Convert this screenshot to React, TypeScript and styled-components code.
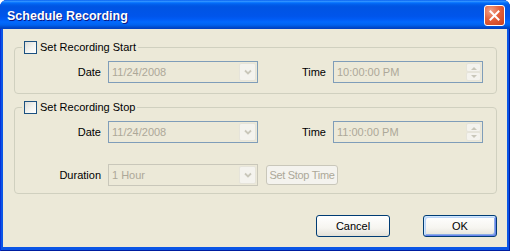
import React from "react";
import styled, { createGlobalStyle } from "styled-components";

const Global = createGlobalStyle`
  html, body { margin: 0; padding: 0; background: #ffffff; }
  body {
    font-family: Tahoma, "Liberation Sans", Arial, sans-serif;
    font-size: 11px;
    color: #000;
  }
`;

const Window = styled.div`
  width: 510px;
  height: 251px;
  box-sizing: border-box;
  display: flex;
  flex-direction: column;
  background: #0A55E6;
  border-radius: 7px 7px 0 0;
  overflow: hidden;
  box-shadow: inset 1px 0 #0831D9, inset -1px 0 #001EA0, inset 0 -1px #001EA0;
`;

const TitleBar = styled.div`
  flex: none;
  height: 29px;
  box-sizing: border-box;
  display: flex;
  align-items: center;
  justify-content: space-between;
  padding: 0 5px 0 7px;
  background: linear-gradient(
    to bottom,
    #0058ee 0%,
    #3593ff 4%,
    #288eff 6%,
    #127dff 8%,
    #036ffc 10%,
    #0262ee 14%,
    #0057e5 20%,
    #0054e3 24%,
    #0055eb 56%,
    #005bf5 66%,
    #026afe 76%,
    #0062ef 86%,
    #0052d6 92%,
    #0046c8 96%,
    #0041c0 100%
  );
`;

const Title = styled.span`
  font-family: "Liberation Sans", Arial, sans-serif;
  font-weight: bold;
  font-size: 12.5px;
  color: #fff;
  text-shadow: 1px 1px #0a1883;
  margin-top: 2px;
`;

const CloseButton = styled.div`
  width: 21px;
  height: 21px;
  box-sizing: border-box;
  border: 1px solid #fff;
  border-radius: 3px;
  background: radial-gradient(circle at 30% 25%, #f1a28a 0%, #e4613c 45%, #c9401c 100%);
  display: flex;
  align-items: center;
  justify-content: center;
  margin-top: 2px;
`;

const Client = styled.div`
  flex: 1;
  margin: 0 3px 4px 3px;
  background: #ece9d8;
  padding: 12px 10px 10px 11px;
  display: flex;
  flex-direction: column;
`;

const Group = styled.fieldset<{ $top: number; $bottom: number }>`
  margin: ${(p) => p.$top}px 0 0 0;
  padding: 0 0 ${(p) => p.$bottom}px 0;
  border: 1px solid #d0d0bf;
  border-radius: 4px;
  min-width: 0;
`;

const Legend = styled.legend`
  margin-left: 7px;
  padding: 0 2px;
  height: 13px;
  line-height: 13px;
  display: flex;
  align-items: center;
  gap: 3px;
`;

const CheckBox = styled.span`
  width: 13px;
  height: 13px;
  box-sizing: border-box;
  border: 1px solid #1c5180;
  background: linear-gradient(135deg, #dcdcd7 0%, #f4f4f0 55%, #ffffff 100%);
`;

const Row = styled.div<{ $top: number }>`
  display: flex;
  align-items: center;
  margin-top: ${(p) => p.$top}px;
`;

const Label = styled.span<{ $w: number }>`
  width: ${(p) => p.$w}px;
  text-align: right;
  margin-right: 7px;
  white-space: nowrap;
`;

const Field = styled.div<{ $border: string }>`
  width: 150px;
  height: 22px;
  box-sizing: border-box;
  border: 1px solid ${(p) => p.$border};
  background: #ece9d8;
  display: flex;
  align-items: center;
  justify-content: space-between;
  color: #aca899;
`;

const FieldText = styled.span`
  padding-left: 3px;
`;

const DropButton = styled.div`
  width: 17px;
  height: 18px;
  margin: 1px;
  box-sizing: border-box;
  border: 1px solid #e6e4da;
  border-radius: 2px;
  background: #f4f3ee;
  display: flex;
  align-items: center;
  justify-content: center;
`;

const Spinner = styled.div`
  width: 15px;
  height: 18px;
  margin: 1px;
  display: flex;
  flex-direction: column;
`;

const SpinHalf = styled.div`
  flex: 1;
  box-sizing: border-box;
  border: 1px solid #e6e4da;
  border-radius: 2px;
  background: #f4f3ee;
  display: flex;
  align-items: center;
  justify-content: center;
`;

const DisabledButton = styled.div`
  width: 72px;
  height: 20px;
  margin-left: 8px;
  box-sizing: border-box;
  border: 1px solid #c9c7ba;
  border-radius: 3px;
  background: #f4f3ee;
  color: #aca899;
  letter-spacing: -0.3px;
  white-space: nowrap;
  display: flex;
  align-items: center;
  justify-content: center;
`;

const ButtonRow = styled.div`
  display: flex;
  justify-content: flex-end;
  gap: 33px;
  margin-top: 21px;
`;

const Button = styled.div<{ $default?: boolean }>`
  width: 74px;
  height: 22px;
  box-sizing: border-box;
  border: 1px solid #003c74;
  border-radius: 3px;
  background: linear-gradient(to bottom, #ffffff 0%, #f6f5f0 60%, #e3e1d8 100%);
  display: flex;
  align-items: center;
  justify-content: center;
  box-shadow: ${(p) =>
    p.$default
      ? "inset 1px 1px #cee7ff, inset -1px -1px #6982ee, inset 2px 2px #bcd4f6, inset -2px -2px #89ade4"
      : "none"};
`;

const Chevron = () => (
  <svg width="8" height="6" viewBox="0 0 8 6">
    <path d="M1 1.5 L4 4.5 L7 1.5" fill="none" stroke="#c9c7ba" strokeWidth="1.8" />
  </svg>
);

const Arrow = ({ up }: { up?: boolean }) => (
  <svg width="6" height="4" viewBox="0 0 6 4">
    <path d={up ? "M0 4 L3 1 L6 4 Z" : "M0 0 L3 3 L6 0 Z"} fill="#c9c7ba" />
  </svg>
);

const CloseX = () => (
  <svg width="11" height="11" viewBox="0 0 11 11">
    <path d="M1.5 1.5 L9.5 9.5 M9.5 1.5 L1.5 9.5" stroke="#fff" strokeWidth="2" strokeLinecap="square" />
  </svg>
);

const Combo = ({ value, border }: { value: string; border: string }) => (
  <Field $border={border}>
    <FieldText>{value}</FieldText>
    <DropButton>
      <Chevron />
    </DropButton>
  </Field>
);

const TimeField = ({ value }: { value: string }) => (
  <Field $border="#7f9db9">
    <FieldText>{value}</FieldText>
    <Spinner>
      <SpinHalf>
        <Arrow up />
      </SpinHalf>
      <SpinHalf>
        <Arrow />
      </SpinHalf>
    </Spinner>
  </Field>
);

export default function App() {
  return (
    <>
      <Global />
      <Window>
        <TitleBar>
          <Title>Schedule Recording</Title>
          <CloseButton>
            <CloseX />
          </CloseButton>
        </TitleBar>
        <Client>
          <Group $top={0} $bottom={10}>
            <Legend>
              <CheckBox />
              Set Recording Start
            </Legend>
            <Row $top={7}>
              <Label $w={86}>Date</Label>
              <Combo value="11/24/2008" border="#7f9db9" />
              <Label $w={68}>Time</Label>
              <TimeField value="10:00:00 PM" />
            </Row>
          </Group>
          <Group $top={7} $bottom={7}>
            <Legend>
              <CheckBox />
              Set Recording Stop
            </Legend>
            <Row $top={7}>
              <Label $w={86}>Date</Label>
              <Combo value="11/24/2008" border="#7f9db9" />
              <Label $w={68}>Time</Label>
              <TimeField value="11:00:00 PM" />
            </Row>
            <Row $top={21}>
              <Label $w={86}>Duration</Label>
              <Combo value="1 Hour" border="#c9c7ba" />
              <DisabledButton>Set Stop Time</DisabledButton>
            </Row>
          </Group>
          <ButtonRow>
            <Button>Cancel</Button>
            <Button $default>OK</Button>
          </ButtonRow>
        </Client>
      </Window>
    </>
  );
}
